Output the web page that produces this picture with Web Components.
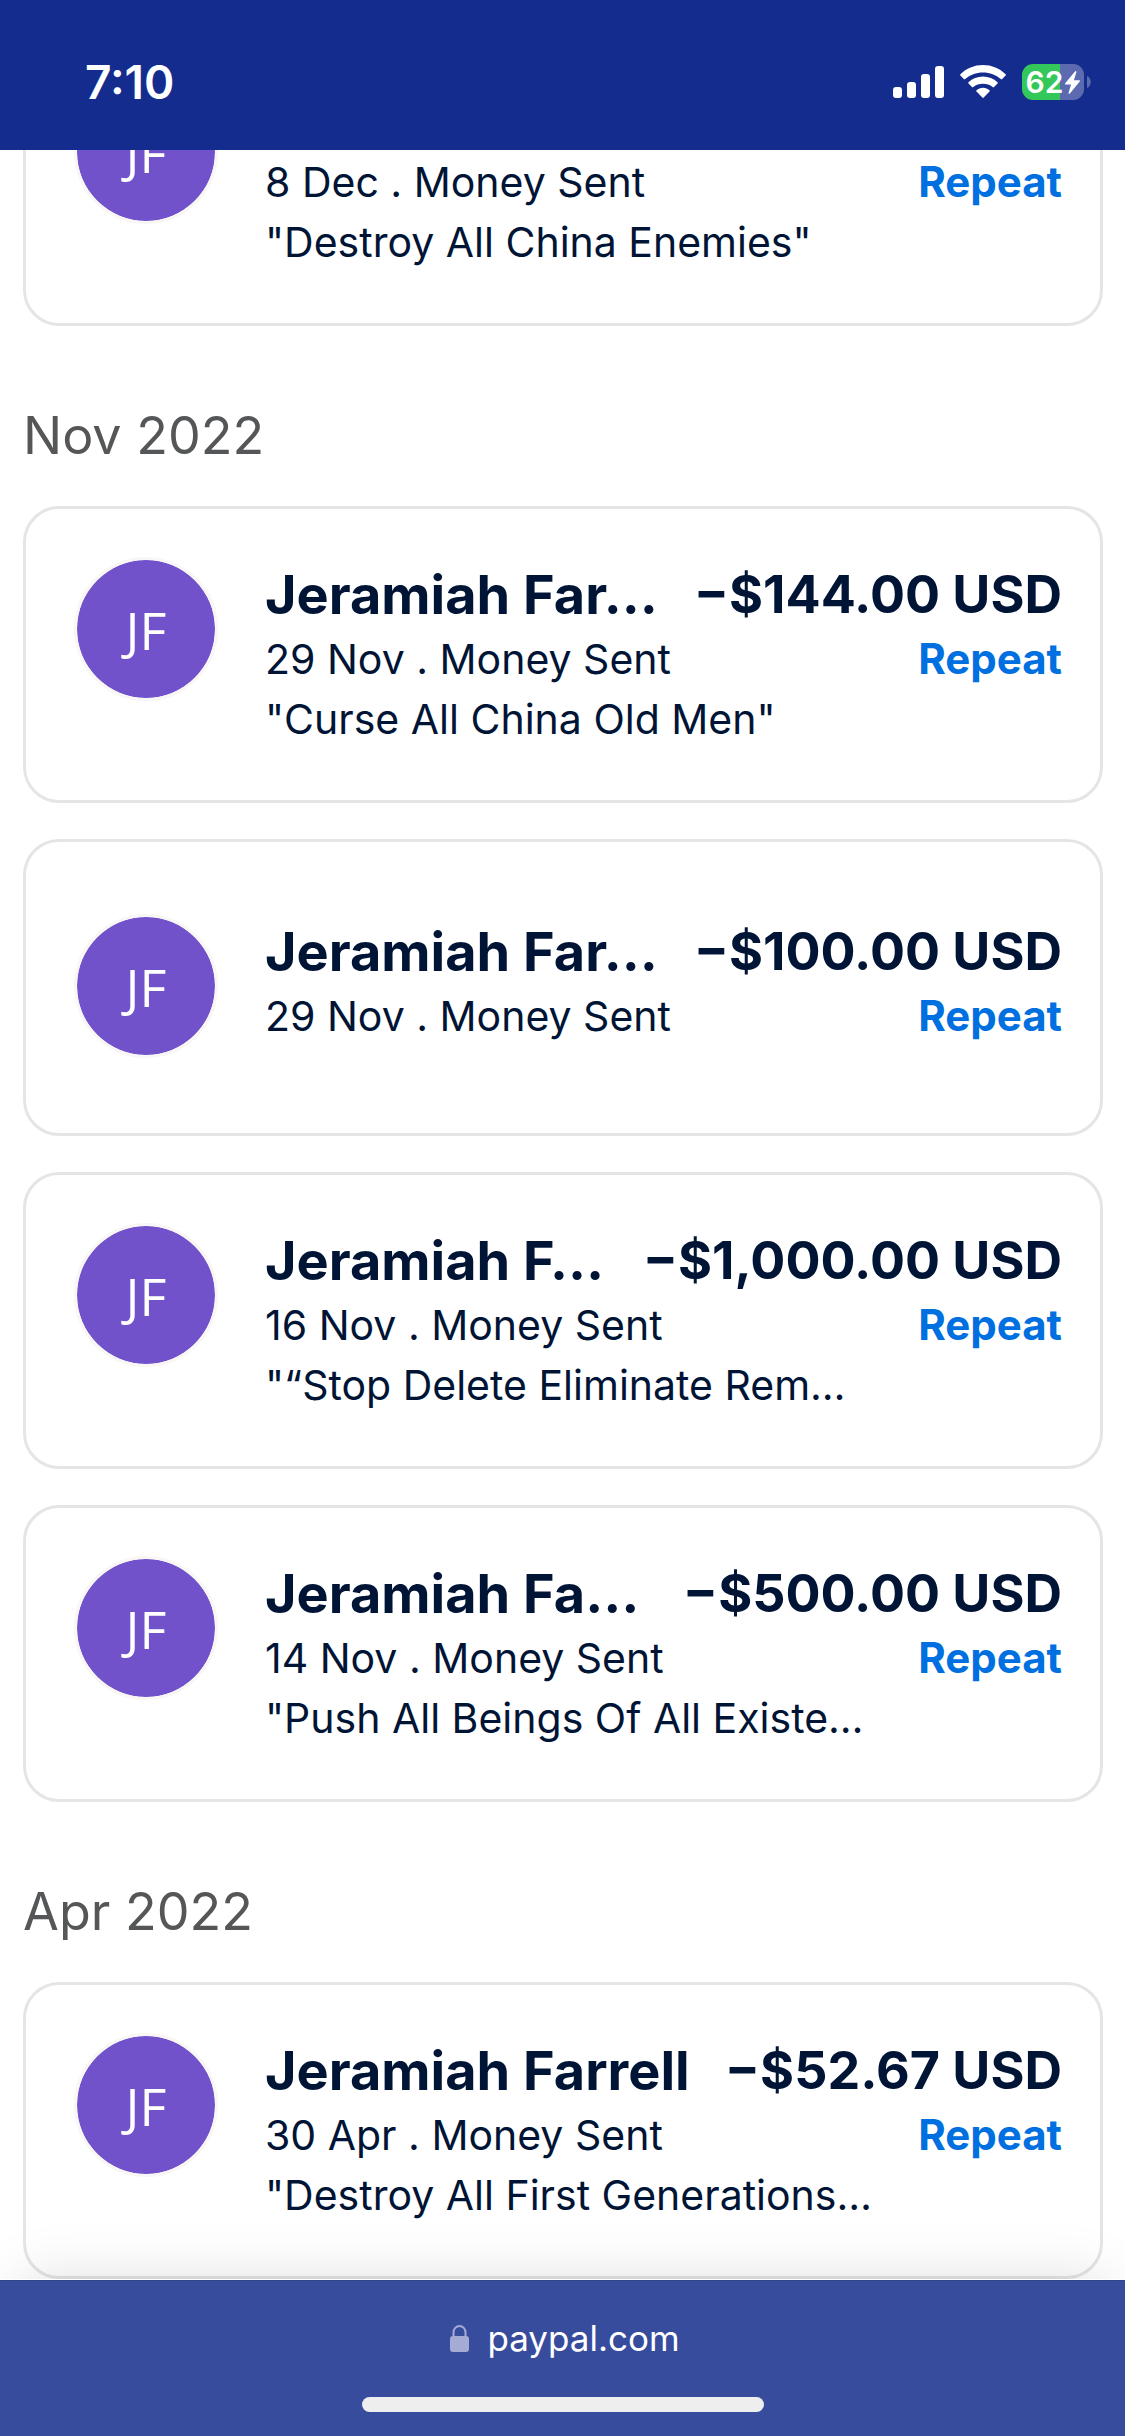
<!DOCTYPE html>
<html lang="en">
<head>
<meta charset="utf-8">
<meta name="viewport" content="width=device-width, initial-scale=1">
<title>Activity</title>
<style>
  html, body { margin: 0; height: 100%; }
  body { font-family: Inter, "Liberation Sans", sans-serif; color: #001435; background: #fff; }
</style>
</head>
<body>
<activity-page></activity-page>
<script>
const make = (host, html) => { host.attachShadow({ mode: 'open' }).innerHTML = html; };

customElements.define('status-bar', class extends HTMLElement {
  connectedCallback() {
    make(this, `
      <style>
        :host { display: flex; align-items: center; justify-content: space-between; box-sizing: border-box;
          height: 150px; flex: none; padding: 14px 34px 0 85px; background: #142c8e; color: #fff; position: relative; z-index: 1; }
        time { font-size: 46px; line-height: 52px; font-weight: 600; }
        .icons { display: flex; align-items: center; gap: 16px; }
        .battery { display: flex; align-items: center; gap: 3px; }
        .level { display: flex; align-items: center; justify-content: center; gap: 2px; width: 62px; height: 36px; border-radius: 11px;
          background: linear-gradient(90deg, #34c759 38px, #5c6bb0 38px); font-size: 30px; line-height: 36px; font-weight: 600; }
        svg { display: block; fill: #fff; }
      </style>
      <time>7:10</time>
      <div class="icons">
        <svg width="51" height="32" viewBox="0 0 51 32" role="img" aria-label="Signal">
          <rect y="21" width="9" height="11" rx="3"/><rect x="14" y="16" width="9" height="16" rx="3"/>
          <rect x="28" y="8" width="9" height="24" rx="3"/><rect x="42" width="9" height="32" rx="3"/>
        </svg>
        <svg width="46" height="34" viewBox="0 0 46 34" role="img" aria-label="Wi-Fi">
          <path d="M23 0C31.800 0 39.800 3.400 45.600 9.200q.6.700 0 1.400l-3.400 3.500q-.7.600-1.300 0C36.100 9.700 29.900 7.400 23 7.400S9.900 9.700 5.100 14.100q-.6.600-1.300 0L.4 10.600q-.6-.7 0-1.400C6.200 3.400 14.200 0 23 0Z"/>
          <path d="M23 11.500c5.600 0 10.700 2.100 14.500 5.700q.7.700 0 1.400L34 22.100q-.7.600-1.300 0C30 19.900 26.700 18.800 23 18.800s-7 1.100-9.700 3.300q-.6.600-1.300 0l-3.500-3.500q-.7-.7 0-1.400C12.300 13.600 17.400 11.500 23 11.500Z"/>
          <path d="M23 22.800c2.500 0 4.700.9 6.500 2.400q.7.700 0 1.400l-5.800 6q-.7.700-1.400 0l-5.800-6q-.7-.7 0-1.400c1.800-1.500 4-2.400 6.500-2.400Z"/>
        </svg>
        <div class="battery">
          <div class="level"><span>62</span>
            <svg width="15" height="23" viewBox="0 0 15 23" aria-hidden="true"><path d="M10.200.3 0 12.600q-.3.800.6.900h5.500L3.500 22q.1 1.200 1.200.7L14.900 10.200q.3-.8-.6-.9H8.900L11.400.9Q11.200-.4 10.200.3Z"/></svg>
          </div>
          <svg width="4" height="12" viewBox="0 0 4 12" aria-hidden="true"><path d="M0 0c5 2 5 10 0 12Z" fill="#5c6bb0"/></svg>
        </div>
      </div>`);
  }
});

customElements.define('user-avatar', class extends HTMLElement {
  connectedCallback() {
    make(this, `
      <style>
        :host { display: grid; place-items: center; flex: none; box-sizing: border-box; width: 144px; height: 144px; padding-top: 2px;
          border: 3px solid #f9f7f5; border-radius: 50%; background: #7152cb; background-clip: padding-box;
          color: #fff; font: 52px/60px "Open Sans", "Noto Sans", sans-serif; }
      </style><span><slot></slot></span>`);
  }
});

customElements.define('month-heading', class extends HTMLElement {
  connectedCallback() {
    make(this, `
      <style>
        :host { display: block; padding-top: 40px; }
        h2 { margin: 0; font-size: 52px; line-height: 68px; font-weight: 400; color: #545658; }
      </style><h2><slot></slot></h2>`);
  }
});

customElements.define('transaction-card', class extends HTMLElement {
  connectedCallback() {
    make(this, `
      <style>
        :host { display: flex; align-items: center; box-sizing: border-box; min-height: 297px; flex: none;
          border: 3px solid #e5e5e5; border-radius: 36px; padding: 36px 38px 36px 48px; background: #fff; }
        .row { display: flex; align-items: flex-start; gap: 47px; flex: 1; min-width: 0; padding-bottom: 3px; }
        .body { flex: 1; min-width: 0; }
        .line { display: flex; justify-content: space-between; gap: 16px; white-space: nowrap; font-size: 41px; line-height: 60px; }
        .top { min-height: 68px; padding-top: 4px; font-size: 52px; line-height: 68px; font-weight: 700; }
        .top slot[name=name] { font-size: 54px; }
        a { color: #0070e0; font-size: 42px; font-weight: 700; text-decoration: none; }
      </style>
      <div class="row">
        <user-avatar>JF</user-avatar>
        <div class="body">
          <div class="line top"><slot name="name"></slot><slot name="amount"></slot></div>
          <div class="line"><slot name="date"></slot><a href="#repeat">Repeat</a></div>
          <div class="line"><slot name="note"></slot></div>
        </div>
      </div>`);
  }
});

customElements.define('address-bar', class extends HTMLElement {
  connectedCallback() {
    make(this, `
      <style>
        :host { display: flex; flex-direction: column; align-items: center; justify-content: space-between; box-sizing: border-box;
          height: 157px; flex: none; padding: 36px 0 24px; border-top: 1px solid #fff; background: #384c9e; background-clip: padding-box; color: #fff;
          position: relative; z-index: 1; box-shadow: 0 -20px 60px -20px rgba(0,0,0,.13), inset 0 1px #33448a; }
        .site { display: flex; align-items: center; gap: 18px; padding-left: 5px; font-size: 35px; line-height: 44px; }
        .home { width: 402px; height: 15px; border-radius: 8px; background: #eee; }
      </style>
      <div class="site">
        <svg width="19" height="27" viewBox="0 0 19 27" role="img" aria-label="Secure"><rect y="11" width="19" height="16" rx="3" fill="#a5abd3"/><path d="M3.500 12V7.500a6 6.500 0 0 1 12 0V12" fill="none" stroke="#a5abd3" stroke-width="2"/></svg>
        <span>paypal.com</span>
      </div>
      <div class="home"></div>`);
  }
});

customElements.define('activity-page', class extends HTMLElement {
  connectedCallback() {
    const card = (name, amount, date, note) => `<transaction-card>
      ${name ? `<span slot="name">${name}</span><span slot="amount">${amount}</span>` : ''}
      <span slot="date">${date} . Money Sent</span>${note ? `<span slot="note">${note}</span>` : ''}
    </transaction-card>`;
    make(this, `
      <style>
        :host { display: flex; flex-direction: column; height: 100vh; overflow: hidden; }
        main { display: flex; flex-direction: column; justify-content: flex-end; gap: 36px; flex: 1; min-height: 0; padding: 0 22px 0 23px; }
      </style>
      <status-bar></status-bar>
      <main>
        ${card('', '', '8 Dec', '"Destroy All China Enemies"')}
        <month-heading>Nov 2022</month-heading>
        ${card('Jeramiah Far…', '−$144.00 USD', '29 Nov', '"Curse All China Old Men"')}
        ${card('Jeramiah Far…', '−$100.00 USD', '29 Nov', '')}
        ${card('Jeramiah F…', '−$1,000.00 USD', '16 Nov', '"“Stop Delete Eliminate Rem…')}
        ${card('Jeramiah Fa…', '−$500.00 USD', '14 Nov', '"Push All Beings Of All Existe…')}
        <month-heading>Apr 2022</month-heading>
        ${card('Jeramiah Farrell', '−$52.67 USD', '30 Apr', '"Destroy All First Generations…')}
      </main>
      <address-bar></address-bar>`);
  }
});
</script>
</body>
</html>
